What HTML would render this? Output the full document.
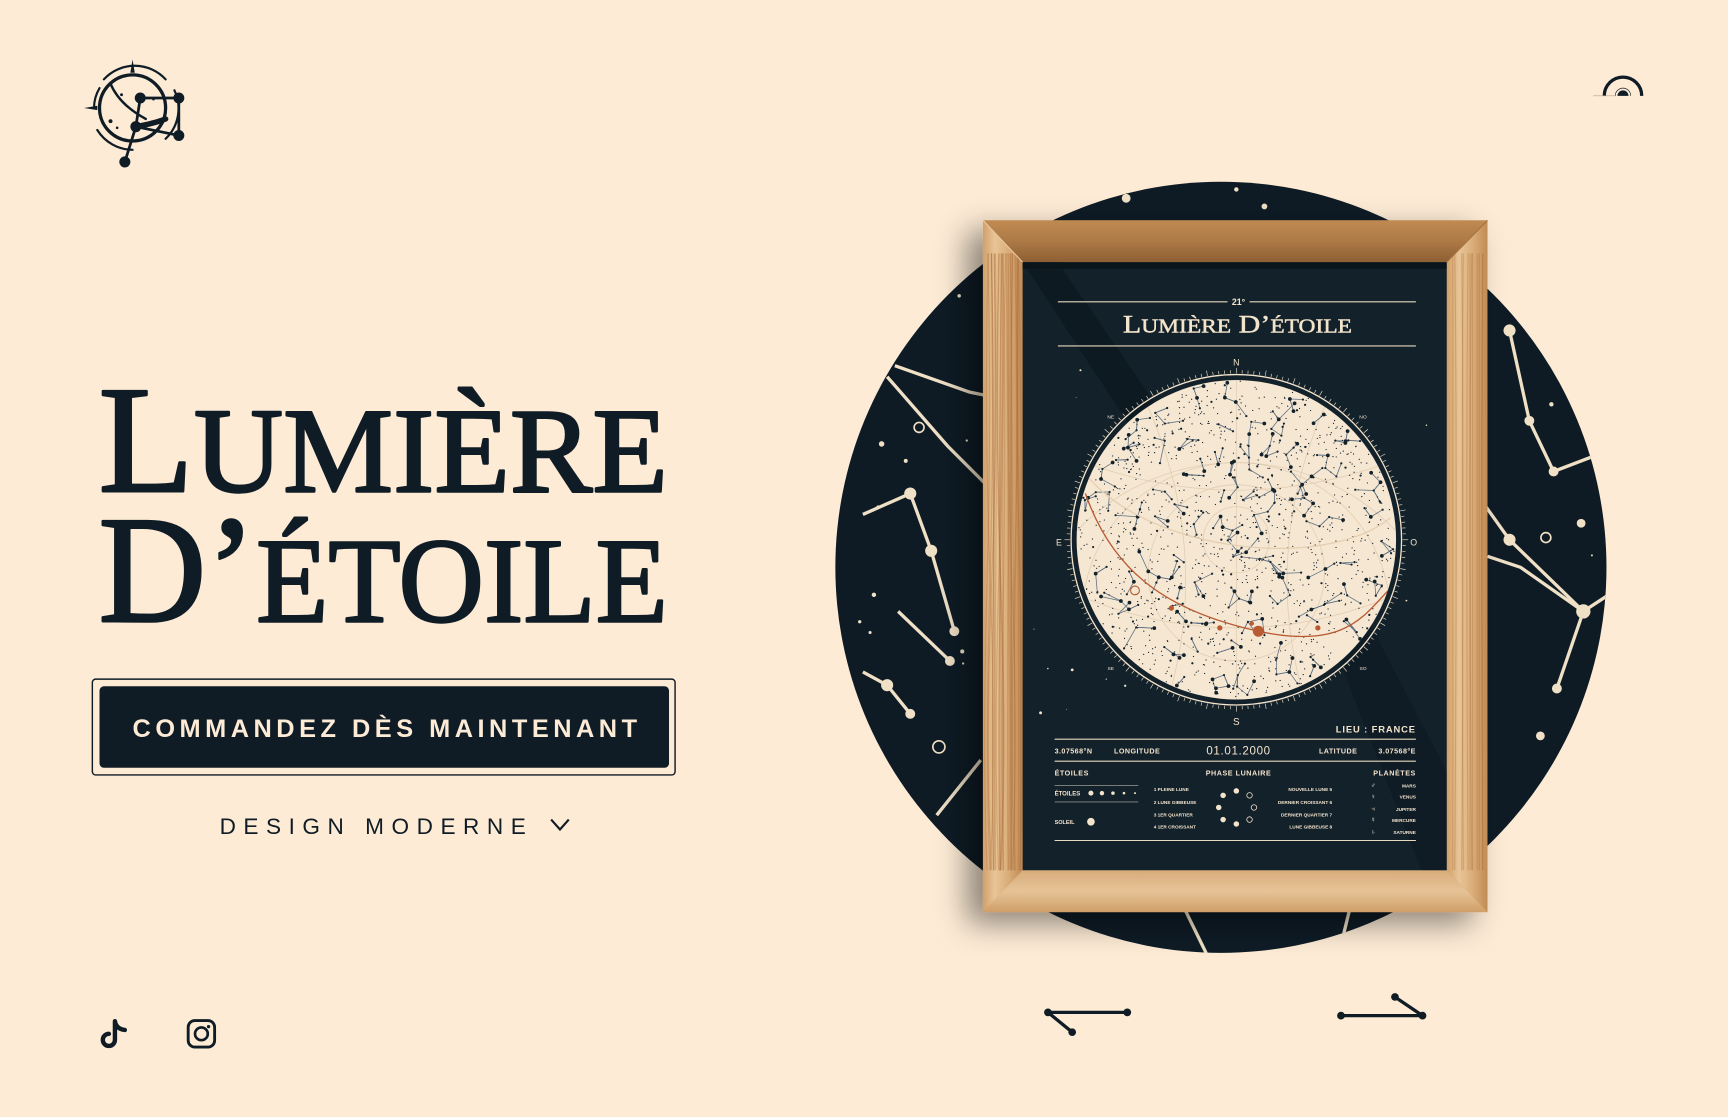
<!DOCTYPE html>
<html><head><meta charset="utf-8">
<style>
html,body{margin:0;padding:0;background:#fdebd5;}
body{width:1728px;height:1117px;overflow:hidden;}
svg{display:block}
</style></head>
<body>
<svg id="s" width="1728" height="1117" viewBox="0 0 1568 1014" xmlns="http://www.w3.org/2000/svg">
<defs>
  <linearGradient id="woodV" x1="0" y1="0" x2="1" y2="0">
    <stop offset="0" stop-color="#d2a06a"/><stop offset="0.3" stop-color="#e8c497"/>
    <stop offset="0.6" stop-color="#dcb07c"/><stop offset="1" stop-color="#c18b55"/>
  </linearGradient>
  <linearGradient id="woodH" x1="0" y1="0" x2="0" y2="1">
    <stop offset="0" stop-color="#c08a52"/><stop offset="0.5" stop-color="#ad7a46"/><stop offset="1" stop-color="#8e5f33"/>
  </linearGradient>
  <linearGradient id="woodB" x1="0" y1="0" x2="0" y2="1">
    <stop offset="0" stop-color="#d7ac7a"/><stop offset="0.5" stop-color="#e6c397"/><stop offset="1" stop-color="#cf9f68"/>
  </linearGradient>
  <filter id="sh" x="-30%" y="-30%" width="160%" height="160%">
    <feDropShadow dx="-14" dy="10" stdDeviation="14" flood-color="#000" flood-opacity="0.45"/>
  </filter>
  <clipPath id="chartClip"><circle cx="1122" cy="490" r="145"/></clipPath>
  <clipPath id="bgClip"><circle cx="1108" cy="515" r="350"/></clipPath>
  <clipPath id="posterClip"><rect x="928" y="238" width="385" height="552"/></clipPath>
</defs>

<!-- LOGO -->
<g stroke="#0f1c26" fill="none" stroke-linecap="round">
  <path d="M94,72 A38,38 0 0 1 150,72" stroke-width="2"/>
  <path d="M158,82 A38,38 0 0 1 150,126" stroke-width="2"/>
  <path d="M88,118 A38,38 0 0 0 120,136" stroke-width="2"/>
  <path d="M85,98 A36,36 0 0 1 90,80" stroke-width="2"/>
  <circle cx="120" cy="98" r="30" stroke-width="3"/>
  <path d="M100,76 Q108,95 132,108" stroke-width="2.2"/>
  <path d="M123,115 Q140,112 150,108" stroke-width="5"/>
  <path d="M127,89 L162,89 L162,123 L123,115 Z" stroke-width="2.5"/>
  <path d="M123,115 L113,147" stroke-width="2.5"/>
</g>
<g fill="#0f1c26">
  <polygon points="120,54 122,66 118,66"/>
  <polygon points="76,98 88,96 88,100"/>
  <circle cx="127" cy="89" r="5"/><circle cx="162" cy="89" r="5"/>
  <circle cx="162" cy="123" r="5"/><circle cx="123" cy="115" r="5"/>
  <circle cx="113" cy="147" r="5"/>
  <circle cx="100" cy="110" r="1.8"/><circle cx="110" cy="86" r="1.3"/><circle cx="139" cy="90" r="1.2"/><circle cx="106" cy="116" r="1.2"/>
</g>

<!-- top-right icon -->
<g fill="none" stroke="#0f1c26">
  <path d="M1456,87 A17,17 0 0 1 1490,87" stroke-width="3"/>
  <path d="M1466,87 A7,7 0 0 1 1480,87" stroke-width="0.6"/>
  <line x1="1446" y1="87" x2="1466" y2="87" stroke-width="0.5" stroke="#b0a090"/>
</g>
<path d="M1468,87 A5,5 0 0 1 1478,87 Z" fill="#0f1c26"/>

<!-- TITLE -->
<g fill="#0f1c26" stroke="#0f1c26" stroke-width="2.2" stroke-linejoin="round" font-family="Liberation Serif, serif">
  <text x="89" y="446" font-size="139" textLength="517" lengthAdjust="spacingAndGlyphs">L<tspan font-size="110">UMIÈRE</tspan></text>
  <text x="89" y="564" font-size="139" textLength="517" lengthAdjust="spacingAndGlyphs">D’<tspan font-size="110">ÉTOILE</tspan></text>
</g>

<!-- BUTTON -->
<rect x="83.5" y="616.5" width="529" height="87" rx="3" fill="none" stroke="#0f1c26" stroke-width="1.3"/>
<rect x="90" y="623" width="517" height="74" rx="4" fill="#0f1c26"/>
<text x="120" y="669" font-family="Liberation Sans, sans-serif" font-weight="bold" font-size="23" fill="#fdebd5" textLength="458" lengthAdjust="spacing">COMMANDEZ DÈS MAINTENANT</text>

<text x="199" y="757" font-family="Liberation Sans, sans-serif" font-size="20.5" fill="#0f1c26" textLength="278" lengthAdjust="spacing">DESIGN MODERNE</text>
<path d="M500,744 L508,753 L516,744" fill="none" stroke="#0f1c26" stroke-width="2"/>

<!-- social -->
<path d="M104,927 L104,944 A5.5,5.5 0 1 1 98.5,938.5 M104,927 Q105,934 113,935" fill="none" stroke="#0f1c26" stroke-width="4" stroke-linecap="round"/>
<rect x="170.5" y="926.5" width="24" height="24" rx="6" fill="none" stroke="#0f1c26" stroke-width="2.6"/>
<circle cx="182.5" cy="938.5" r="5.8" fill="none" stroke="#0f1c26" stroke-width="2.4"/>
<circle cx="189" cy="932" r="1.5" fill="#0f1c26"/>

<!-- arrows -->
<g stroke="#0f1c26" stroke-width="3" fill="#0f1c26">
  <line x1="951" y1="919" x2="1023" y2="919"/><line x1="951" y1="919" x2="973" y2="937"/>
  <circle cx="951" cy="919" r="3.5" stroke="none"/><circle cx="1023" cy="919" r="3.5" stroke="none"/><circle cx="973" cy="937" r="3.5" stroke="none"/>
  <line x1="1217" y1="922" x2="1291" y2="922"/><line x1="1291" y1="922" x2="1266" y2="905"/>
  <circle cx="1217" cy="922" r="3.5" stroke="none"/><circle cx="1291" cy="922" r="3.5" stroke="none"/><circle cx="1266" cy="905" r="3.5" stroke="none"/>
</g>

<!-- BG circle -->
<circle cx="1108" cy="515" r="350" fill="#0e1b25"/>
<g clip-path="url(#bgClip)" stroke="#efe0c6" stroke-width="3" fill="#efe0c6">
  <polyline fill="none" points="812,332 880,356 900,360"/>
  <polyline fill="none" points="805,342 860,405 895,440"/>
  <polyline fill="none" points="783,467 826,448 845,500 866,573"/>
  <polyline fill="none" points="815,555 862,600"/>
  <polyline fill="none" points="783,610 805,622 826,648"/>
  <polyline fill="none" points="850,740 890,690"/>
  <polyline fill="none" points="1370,300 1388,382 1410,428 1444,415"/>
  <polyline fill="none" points="1345,455 1370,490 1437,555 1413,625"/>
  <polyline fill="none" points="1350,505 1380,515 1437,555 1460,540"/>
  <polyline fill="none" points="1075,825 1095,866"/>
  <polyline fill="none" points="1225,825 1215,866"/>
  <polyline fill="none" points="1355,770 1390,730"/>
  <circle cx="826" cy="448" r="4"/><circle cx="845" cy="500" r="4"/><circle cx="866" cy="573" r="3"/><circle cx="862" cy="600" r="3"/>
  <circle cx="805" cy="622" r="4"/><circle cx="826" cy="648" r="3"/><circle cx="1370" cy="300" r="4"/><circle cx="1388" cy="382" r="3"/>
  <circle cx="1410" cy="428" r="3"/><circle cx="1370" cy="490" r="4"/><circle cx="1437" cy="555" r="5"/><circle cx="1413" cy="625" r="3"/>
  <circle cx="1022" cy="180" r="4" stroke="none"/><circle cx="1122" cy="172" r="2" stroke="none"/>
  <circle cx="800" cy="403" r="2.5" stroke="none"/><circle cx="793" cy="540" r="2" stroke="none"/><circle cx="1398" cy="668" r="4" stroke="none"/>
  <circle cx="1435" cy="475" r="4" stroke="none"/><circle cx="1408" cy="367" r="2" stroke="none"/>
</g>
<g fill="none" stroke="#efe0c6" stroke-width="1.5">
  <circle cx="834" cy="388" r="4.5"/><circle cx="852" cy="678" r="5.5"/><circle cx="1403" cy="488" r="4.5"/>
</g>
<g id="bgstars" fill="#efe0c6" clip-path="url(#bgClip)"></g>

<!-- FRAME -->
<g filter="url(#sh)">
  <rect x="892" y="200" width="458" height="628" fill="#c8955f"/>
</g>
<polygon points="892,200 1350,200 1313,238 928,238" fill="url(#woodH)"/>
<polygon points="892,200 928,238 928,790 892,828" fill="url(#woodV)"/>
<polygon points="1350,200 1350,828 1313,790 1313,238" fill="url(#woodV)"/>
<polygon points="892,828 928,790 1313,790 1350,828" fill="url(#woodB)"/>
<g id="grain" fill="none" stroke="#a86c38" stroke-opacity="0.35" stroke-width="1"></g>
<line x1="892" y1="200" x2="928" y2="238" stroke="#e9c9a0" stroke-width="1"/>
<line x1="1350" y1="200" x2="1313" y2="238" stroke="#a67442" stroke-width="1"/>

<!-- POSTER -->
<rect x="928" y="238" width="385" height="552" fill="#13212b"/>
<g clip-path="url(#posterClip)">
  <polygon points="928,238 960,238 1120,470 1080,470" fill="#0c1820" opacity="0.7"/>
  <polygon points="1200,560 1240,560 1313,700 1313,790 1290,790" fill="#0c1820" opacity="0.5"/>
  <rect x="928" y="238" width="385" height="6" fill="#0a141b"/>
</g>
<g fill="#f3e4cc" font-family="Liberation Sans, sans-serif">
  <line x1="960" y1="274" x2="1114" y2="274" stroke="#e8d8bd" stroke-width="1"/>
  <line x1="1134" y1="274" x2="1285" y2="274" stroke="#e8d8bd" stroke-width="1"/>
  <text x="1124" y="277" font-size="8" font-weight="bold" text-anchor="middle">21°</text>
  <text x="1019" y="302" font-size="23" font-family="Liberation Serif, serif" stroke="#f3e4cc" stroke-width="0.4" textLength="208" lengthAdjust="spacingAndGlyphs">L<tspan font-size="18">UMIÈRE</tspan> D’<tspan font-size="18">ÉTOILE</tspan></text>
  <line x1="960" y1="314" x2="1285" y2="314" stroke="#e8d8bd" stroke-width="1"/>
  <text x="1122" y="332" font-size="8" text-anchor="middle">N</text>
  <text x="1122" y="658" font-size="9" text-anchor="middle">S</text>
  <text x="961" y="495" font-size="8" text-anchor="middle">E</text>
  <text x="1283" y="495" font-size="8" text-anchor="middle">O</text>
  <text x="1008" y="380" font-size="4.5" text-anchor="middle">NE</text>
  <text x="1237" y="380" font-size="4.5" text-anchor="middle">NO</text>
  <text x="1008" y="608" font-size="4.5" text-anchor="middle">SE</text>
  <text x="1237" y="608" font-size="4.5" text-anchor="middle">SO</text>
</g>
<g id="ticks" stroke="#e8d8bd" stroke-width="0.6"></g>
<circle cx="1122" cy="490" r="150" fill="none" stroke="#f3e4cc" stroke-width="1.2"/>
<circle cx="1122" cy="490" r="145" fill="#f6e7d2"/>
<g clip-path="url(#chartClip)">
  <g fill="none" stroke="#e0cdb3" stroke-width="0.7">
    <circle cx="1122" cy="490" r="30"/><circle cx="1122" cy="520" r="80"/><circle cx="1122" cy="560" r="140"/><circle cx="1122" cy="620" r="200"/>
    <line x1="1122" y1="345" x2="1122" y2="635"/><path d="M1040,365 Q1100,500 1060,635"/><path d="M1204,365 Q1144,500 1184,635"/>
    <path d="M985,420 Q1122,470 1260,420"/><path d="M977,540 Q1122,600 1267,540"/>
  </g>
  <g id="const" fill="none" stroke="#5d6f80" stroke-width="0.7"></g>
  <g id="cstars" fill="#13212b"></g>
  <path d="M985,448 C1010,520 1060,555 1142,573 S1240,555 1262,534" fill="none" stroke="#b85a32" stroke-width="1.2"/>
  <path d="M985,430 C1040,500 1200,520 1262,470" fill="none" stroke="#e5cfb2" stroke-width="1.2"/>
  <g fill="#b85a32"><circle cx="1142" cy="573" r="5"/><circle cx="1063" cy="552" r="2.4"/><circle cx="1107" cy="570" r="2.4"/><circle cx="1196" cy="570" r="2.4"/><circle cx="1136" cy="566" r="2"/></g>
  <circle cx="1030" cy="536" r="4" fill="none" stroke="#b85a32" stroke-width="1"/>
</g>
<g id="pstars" fill="#f3e4cc"></g>

<g fill="#f3e4cc" font-family="Liberation Sans, sans-serif" font-weight="bold">
  <text x="1285" y="665" font-size="8.5" text-anchor="end" letter-spacing="0.8">LIEU : FRANCE</text>
  <line x1="957" y1="671" x2="1285" y2="671" stroke="#e8d8bd" stroke-width="1"/>
  <text x="957" y="684" font-size="6.5" letter-spacing="0.4">3.07568°N</text>
  <text x="1011" y="684" font-size="6.5" letter-spacing="0.4">LONGITUDE</text>
  <text x="1124" y="685" font-size="10.5" font-weight="normal" text-anchor="middle" letter-spacing="0.6">01.01.2000</text>
  <text x="1197" y="684" font-size="6.5" letter-spacing="0.4">LATITUDE</text>
  <text x="1285" y="684" font-size="6.5" text-anchor="end" letter-spacing="0.4">3.07568°E</text>
  <line x1="957" y1="691" x2="1285" y2="691" stroke="#e8d8bd" stroke-width="1"/>
  <text x="957" y="704" font-size="6.5" letter-spacing="0.5">ÉTOILES</text>
  <text x="1124" y="704" font-size="6.5" text-anchor="middle" letter-spacing="0.5">PHASE LUNAIRE</text>
  <text x="1285" y="704" font-size="6.5" text-anchor="end" letter-spacing="0.5">PLANÈTES</text>
  <line x1="957" y1="713" x2="1033" y2="713" stroke="#8a8a86" stroke-width="0.8"/>
  <line x1="957" y1="728" x2="1033" y2="728" stroke="#8a8a86" stroke-width="0.8"/>
  <text x="957" y="722" font-size="5.5">ÉTOILES</text>
  <circle cx="990" cy="720" r="2.3"/><circle cx="1000" cy="720" r="2"/><circle cx="1010" cy="720" r="1.6"/><circle cx="1020" cy="720" r="1.2"/><circle cx="1030" cy="720" r="0.9"/>
  <text x="957" y="748" font-size="5">SOLEIL</text>
  <circle cx="990" cy="746" r="3.5"/>
  <g font-size="4.3">
    <text x="1047" y="718">1 PLEINE LUNE</text><text x="1047" y="730">2 LUNE GIBBEUSE</text><text x="1047" y="741">3 1ER QUARTIER</text><text x="1047" y="752">4 1ER CROISSANT</text>
    <text x="1209" y="718" text-anchor="end">NOUVELLE LUNE 5</text><text x="1209" y="730" text-anchor="end">DERNIER CROISSANT 6</text><text x="1209" y="741" text-anchor="end">DERNIER QUARTIER 7</text><text x="1209" y="752" text-anchor="end">LUNE GIBBEUSE 8</text>
    <text x="1285" y="715" text-anchor="end">MARS</text><text x="1285" y="725" text-anchor="end">VENUS</text><text x="1285" y="736" text-anchor="end">JUPITER</text><text x="1285" y="746" text-anchor="end">MERCURE</text><text x="1285" y="757" text-anchor="end">SATURNE</text>
    <text x="1244" y="715" font-size="6" font-weight="normal">♂</text><text x="1244" y="725" font-size="6" font-weight="normal">♀</text><text x="1244" y="736" font-size="6" font-weight="normal">♃</text><text x="1244" y="746" font-size="6" font-weight="normal">☿</text><text x="1244" y="757" font-size="6" font-weight="normal">♄</text>
  </g>
  <circle cx="1110" cy="722" r="2.5"/><circle cx="1106" cy="733" r="2.5"/><circle cx="1110" cy="744" r="2.5"/><circle cx="1122" cy="718" r="2.5"/><circle cx="1122" cy="748" r="2.5"/>
  <circle cx="1134" cy="722" r="2.5" fill="none" stroke="#f3e4cc" stroke-width="0.7"/><circle cx="1138" cy="733" r="2.5" fill="none" stroke="#f3e4cc" stroke-width="0.7"/><circle cx="1134" cy="744" r="2.5" fill="none" stroke="#f3e4cc" stroke-width="0.7"/>
  <line x1="957" y1="763" x2="1285" y2="763" stroke="#e8d8bd" stroke-width="1"/>
</g>
</svg>
<script>
(function(){
var NS="http://www.w3.org/2000/svg",seed=7;
function r(){seed=(seed*16807)%2147483647;return (seed-1)/2147483646;}
function el(t,a,p){var e=document.createElementNS(NS,t);for(var k in a)e.setAttribute(k,a[k]);document.getElementById(p).appendChild(e);return e;}
var pts=[];
for(var i=0;i<1400;i++){var a=r()*6.283,d=Math.sqrt(r())*144;var x=1122+Math.cos(a)*d,y=490+Math.sin(a)*d;var s=r();var rad=s<0.75?0.55:(s<0.93?1:1.7);el('circle',{cx:x.toFixed(1),cy:y.toFixed(1),r:rad},'cstars');if(s>0.8)pts.push([x,y]);}
for(var j=0;j<pts.length;j++){var p=pts[j],best=null,bd=1e9;for(var k=0;k<pts.length;k++){if(k==j)continue;var q=pts[k],dd=(p[0]-q[0])*(p[0]-q[0])+(p[1]-q[1])*(p[1]-q[1]);if(dd<bd&&dd>80){bd=dd;best=q;}}if(best&&bd<1100)el('line',{x1:p[0].toFixed(1),y1:p[1].toFixed(1),x2:best[0].toFixed(1),y2:best[1].toFixed(1)},'const');}
for(var t=0;t<180;t++){var a=t/180*6.283,l=(t%5==0)?5:3;el('line',{x1:(1122+Math.cos(a)*151).toFixed(1),y1:(490+Math.sin(a)*151).toFixed(1),x2:(1122+Math.cos(a)*(151+l)).toFixed(1),y2:(490+Math.sin(a)*(151+l)).toFixed(1)},'ticks');}
for(var i=0;i<40;i++){var x=935+r()*370,y=320+r()*330;var dx=x-1122,dy=y-490;if(dx*dx+dy*dy<160*160)continue;el('circle',{cx:x.toFixed(1),cy:y.toFixed(1),r:(r()*1+0.3).toFixed(2)},'pstars');}
for(var i=0;i<60;i++){var x=760+r()*700,y=165+r()*700;if(x>880&&x<1360&&y>190&&y<840)continue;el('circle',{cx:x.toFixed(1),cy:y.toFixed(1),r:(r()*2+0.8).toFixed(2)},'bgstars');}
for(var i=0;i<30;i++){var x=896+r()*28;el('path',{d:'M'+x.toFixed(1)+',230 q'+(r()*8-4).toFixed(1)+',150 '+(r()*6-3).toFixed(1)+',300 t0,260'},'grain');}
for(var i=0;i<12;i++){var x=1318+r()*28;el('path',{d:'M'+x.toFixed(1)+',230 q'+(r()*6-3).toFixed(1)+',200 0,560'},'grain');}
})();
</script>
</body></html>
